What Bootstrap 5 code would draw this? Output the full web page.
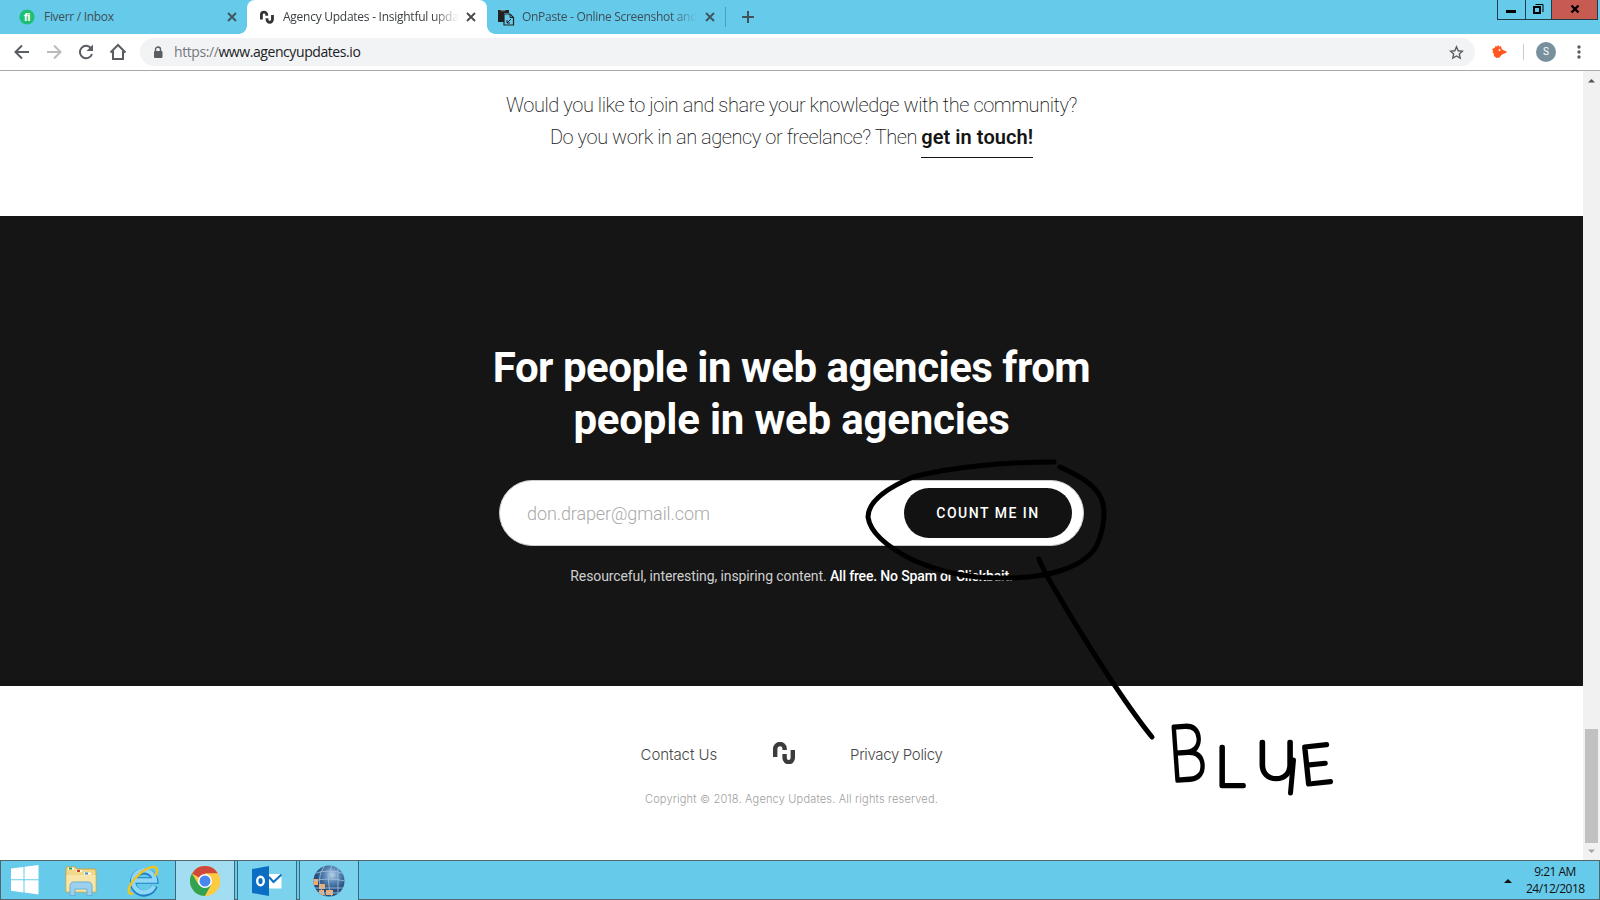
<!DOCTYPE html>
<html lang="en">
<head>
<meta charset="utf-8">
<title>Agency Updates</title>
<link href="https://cdn.jsdelivr.net/npm/bootstrap@5.3.0/dist/css/bootstrap.min.css" rel="stylesheet">
<style>
  body { width: 1600px; height: 900px; overflow: hidden; font-family: "Open Sans", sans-serif; background: #fff; color: #151515; line-height: 1; }
  svg { display: block; flex: none; }
  .tabstrip { height: 34px; background: #66caea; font-size: 12px; letter-spacing: -.3px; color: #3d4f57; }
  .tab-item { height: 34px; white-space: nowrap; }
  .tab-title { line-height: 18px; }
  .tab-fade { -webkit-mask-image: linear-gradient(90deg, #000 calc(100% - 26px), transparent); mask-image: linear-gradient(90deg, #000 calc(100% - 26px), transparent); }
  .tab-one { width: 247px; padding: 0 10px 0 19px; }
  .tab-two { width: 240px; padding: 0 11px 0 13px; background: #fff; border-radius: 8px 8px 0 0; color: #3c4043; }
  .tab-two::before, .tab-two::after { content: ""; position: absolute; bottom: 0; width: 8px; height: 8px; }
  .tab-two::before { left: -8px; background: radial-gradient(circle at 0 0, transparent 7.5px, #fff 8px); }
  .tab-two::after { right: -8px; background: radial-gradient(circle at 100% 0, transparent 7.5px, #fff 8px); }
  .tab-three { width: 238px; padding: 0 10px 0 10px; }
  .tab-rule { width: 1px; height: 20px; background: #4a9fba; }
  .win-buttons { height: 20px; margin-right: 2px; }
  .win-buttons > div { height: 20px; border: 1px solid #1f3b45; border-top: 0; border-left: 0; }
  .win-buttons > div:first-child { border-left: 1px solid #1f3b45; }
  .toolbar { height: 37px; padding: 4px 18px 0 13px; border-bottom: 1px solid #a9a9a9; }
  .omnibox { width: 1335px; height: 28px; border-radius: 14px; background: #f1f3f4; padding: 0 11px 0 13px; font-size: 14px; letter-spacing: -.42px; color: #202124; }
  .avatar { width: 20px; height: 20px; border-radius: 50%; background: #78909c; color: #fff; font: 10px/20px Roboto, sans-serif; }
  .page-area { height: 789px; }
  .site { width: 1583px; font-family: Roboto, sans-serif; }
  .join { height: 145px; padding-top: 18px; font-size: 20px; line-height: 32px; font-weight: 200; letter-spacing: -.44px; }
  .join a { color: #151515; font-weight: 600; letter-spacing: .05px; border-bottom: 1px solid #151515; padding-bottom: 8px; text-decoration: none; }
  .hero { height: 470px; background: #151515; padding-top: 126px; color: #fff; }
  .hero h2 { font-size: 42px; line-height: 52px; font-weight: 700; letter-spacing: -.5px; margin: 0; }
  .hero h2 .second { letter-spacing: -.2px; }
  .signup { width: 585px; height: 66px; border-radius: 33px; background: #fff; border: 1px solid #c9cccb; margin-top: 34px; padding: 0 11px 0 27px; }
  .signup .hint { font-size: 18px; font-weight: 300; color: #a9a9a9; letter-spacing: -.1px; padding-top: 2px; }
  .signup button { width: 168px; height: 50px; border-radius: 25px; background: #121212; color: #fff; border: 0; font-size: 14px; font-weight: 500; letter-spacing: 1.5px; padding: 0; }
  .note { margin-top: 21px; font-size: 14px; line-height: 18px; letter-spacing: -.1px; color: #cfcfcf; }
  .note b { font-weight: 500; color: #fff; letter-spacing: -.16px; }
  .foot { font-family: Inter, sans-serif; font-weight: 300; padding-top: 56px; color: #484848; }
  .foot .links { font-size: 15px; height: 27px; }
  .foot .links .lead-link { letter-spacing: -.08px; }
  .foot .links .tail-link { letter-spacing: -.35px; }
  .foot .copy { font-size: 11px; letter-spacing: .18px; color: #a0a0a0; margin-top: 23px; line-height: 14px; }
  .scroller { width: 17px; background: #f1f1f1; padding: 7px 2px 6px; }
  .thumb { width: 13px; height: 114px; background: #c1c1c1; margin-bottom: 6px; }
  .taskbar { height: 40px; background: #66caea; border: 1px solid #54656c; font-size: 12px; letter-spacing: -.5px; color: #111; }
  .task { width: 60px; height: 39px; border: 1px solid #37697a; border-top: 0; border-bottom: 0; background: #7ad2ed; margin-right: 2px; }
  .task.current { background: #a3ddf1; }
  .clock { width: 58px; line-height: 17px; white-space: nowrap; }
  .ink { left: 0; top: 0; pointer-events: none; }
</style>
</head>
<body class="d-flex flex-column">
<div class="tabstrip d-flex align-items-start">
  <div class="tab-item tab-one d-flex align-items-center">
    <svg width="16" height="16"><circle cx="8" cy="8" r="7.6" fill="#1dbf73"/><text x="8" y="11.8" text-anchor="middle" font-family="Roboto" font-weight="900" font-size="10" fill="#fff">fi</text></svg>
    <div class="tab-title flex-grow-1 pe-1" style="padding-left:9px">Fiverr / Inbox</div>
    <svg width="10" height="10" stroke="#3f535c" stroke-width="1.8"><path d="M1 1l8 8M9 1L1 9"/></svg>
  </div>
  <div class="tab-item tab-two position-relative d-flex align-items-center">
    <svg width="14" height="14" viewBox="0 0 22 22" fill="none" stroke="#333" stroke-width="4.4"><path d="M2.2 15V7.5a4.2 4.2 0 0 1 8.4 0V9M11 13v2a4.2 4.2 0 0 0 8.6 0V8"/></svg>
    <div class="tab-title tab-fade" style="margin-left:9px;letter-spacing:-.26px">Agency Updates - Insightful upda</div>
    <svg class="ms-auto" width="10" height="10" stroke="#45494d" stroke-width="1.8"><path d="M1 1l8 8M9 1L1 9"/></svg>
  </div>
  <div class="tab-item tab-three d-flex align-items-center">
    <svg width="18" height="17"><path d="M1 1h11v3H7v9H1z" fill="#222"/><path d="M3.5 1.7h5" stroke="#888"/><path d="M8 5h5l3.5 3.5V16H7V5z" fill="#66caea" stroke="#222" stroke-width="1.2"/><path d="M13 5v3.5h3.5M14 10l-4 4m0-3v3h3" fill="none" stroke="#222"/></svg>
    <div class="tab-title tab-fade" style="margin-left:7px">OnPaste - Online Screenshot and</div>
    <svg class="ms-auto" width="10" height="10" stroke="#3f535c" stroke-width="1.8"><path d="M1 1l8 8M9 1L1 9"/></svg>
  </div>
  <div class="d-flex align-items-center tab-item"><div class="tab-rule"></div>
    <svg class="ms-3" width="12" height="12" stroke="#3f535c" stroke-width="2"><path d="M6 0v12M0 6h12"/></svg></div>
  <div class="win-buttons d-flex ms-auto">
    <div style="width:29px"><svg width="27" height="19"><path d="M8 10h10v3H8z" fill="#000"/></svg></div>
    <div style="width:26px"><svg width="25" height="19" fill="none" stroke="#000"><path d="M8 7h6v6H8z" stroke-width="2"/><path d="M9.500 4.500h7.500V12"/></svg></div>
    <div style="width:46px;background:#c75b52"><svg width="45" height="19" stroke="#000" stroke-width="2.400"><path d="M19.500 5.500l7 7M26.500 5.500l-7 7"/></svg></div>
  </div>
</div>
<div class="toolbar d-flex align-items-start">
  <div class="d-flex align-items-center" style="height:28px">
    <svg width="18" height="18" fill="none" stroke="#5a5e63" stroke-width="2"><path d="M16 9H3M9 2.500L2.500 9 9 15.500"/></svg>
    <svg style="margin-left:14px" width="18" height="18" fill="none" stroke="#b9bbbd" stroke-width="2"><path d="M2 9h13M9 2.500L15.500 9 9 15.500"/></svg>
    <svg style="margin-left:14px" width="18" height="18"><path d="M14.200 5.500A6.200 6.200 0 1 0 15 11" fill="none" stroke="#5a5e63" stroke-width="2"/><path d="M16 1.500V8H9.500z" fill="#5a5e63"/></svg>
    <svg style="margin-left:14px" width="18" height="18" fill="none" stroke="#5a5e63" stroke-width="2"><path d="M1.500 9.500L9 2l7.500 7.500M4 8v8h10V8"/></svg>
  </div>
  <div class="omnibox d-flex align-items-center" style="margin-left:13px">
    <svg width="10" height="13"><path d="M2.500 5.500V3.500a2.500 2.500 0 0 1 5 0v2" fill="none" stroke="#5a5e63" stroke-width="1.400"/><rect x="1" y="5" width="8.500" height="7" rx="1" fill="#5a5e63"/></svg>
    <div style="margin-left:11px;line-height:20px"><span style="color:#75797d">https://</span>www.agencyupdates.io</div>
    <svg class="ms-auto" width="15" height="15" viewBox="0 0 15 15" fill="none" stroke="#5a5e63" stroke-width="1.400"><path d="M7.500 1.800l1.700 4 4.300.4-3.200 2.800.9 4.200-3.700-2.200-3.700 2.200.9-4.200L1.500 6.200l4.300-.4z"/></svg>
  </div>
  <div class="d-flex align-items-center ms-auto" style="height:28px">
    <svg width="16" height="16"><path d="M1 5l2.500-1L5 1.500l1 1.300L7.500 1l.8 1.700L10 2l.5 2.500L12 6l3.500 1.500v1.300L12 10l-2 1.500-1.500 2L5.500 14 3 12l-.5-3-1-.500.5-2z" fill="#ff5722"/><circle cx="8.500" cy="6" r="1" fill="#fff"/></svg>
    <div style="width:1px;height:16px;background:#c8cacc;margin-left:16px"></div>
    <div class="avatar text-center" style="margin-left:12px">S</div>
    <svg style="margin-left:18px" width="8" height="16" fill="#5a5e63"><circle cx="5" cy="3" r="1.700"/><circle cx="5" cy="8" r="1.700"/><circle cx="5" cy="13" r="1.700"/></svg>
  </div>
</div>
<div class="page-area d-flex">
  <main class="site">
    <section class="join text-center">
      <div>Would you like to join and share your knowledge with the community?</div>
      <div>Do you work in an agency or freelance? Then <a href="#">get in touch!</a></div>
    </section>
    <section class="hero d-flex flex-column align-items-center">
      <h2 class="text-center">For people in web agencies from<br><span class="second">people in web agencies</span></h2>
      <div class="signup d-flex align-items-center justify-content-between"><span class="hint">don.draper@gmail.com</span><button>COUNT ME IN</button></div>
      <div class="note">Resourceful, interesting, inspiring content. <b>All free. No Spam or Clickbait.</b></div>
    </section>
    <footer class="foot text-center">
      <div class="links d-flex justify-content-center align-items-start">
        <span class="lead-link" style="margin-top:5px">Contact Us</span>
        <svg style="margin:0 55px 0 56px" width="22" height="22" viewBox="0 0 22 22" fill="none" stroke="#3c3c3c" stroke-width="4.400"><path d="M2.200 15V7a4.700 4.700 0 0 1 9.400-.5V8M11.600 12v4a4.100 4.100 0 0 0 8.200 0V8"/></svg>
        <span class="tail-link" style="margin-top:5px">Privacy Policy</span>
      </div>
      <div class="copy">Copyright © 2018. Agency Updates. All rights reserved.</div>
    </footer>
  </main>
  <div class="scroller d-flex flex-column">
    <svg width="13" height="5"><path d="M3 4.500L6.500 1 10 4.500z" fill="#505050"/></svg>
    <div class="thumb mt-auto"></div>
    <svg width="13" height="5"><path d="M3 .5L6.500 4 10 .500z" fill="#a3a3a3"/></svg>
  </div>
</div>
<div class="taskbar d-flex align-items-start">
  <svg width="174" height="38" viewBox="1 861 174 38">
    <path d="M11 868.500l12.500-1.600v12.300H11zM24.500 866.700L38.500 865v14.200h-14zM11 880.200h12.500v12.300L11 890.700zM24.500 880.200h14v14.300l-14-2z" fill="#fff"/>
    <path d="M66 868q0-1 1-1h8l2 2h17q2 0 2 2v21H66z" fill="#f1d98c" stroke="#c9a545"/>
    <path d="M68 868.500h6M76 871h6M84 873.500h7" stroke="#fff" stroke-width="2"/><path d="M69 868.500h3" stroke="#20a745" stroke-width="2"/><path d="M77 871h3" stroke="#d63c2c" stroke-width="2"/><path d="M85 873.500h3" stroke="#3295dc" stroke-width="2"/>
    <path d="M66.500 875h29v16.500h-29z" fill="#f8e6a8"/>
    <path d="M70 895.500v-9q0-4.500 4-4.500h14q4 0 4 4.500v9h-5v-6.500H75v6.500z" fill="#9bd0ef" stroke="#6baed2"/>
    <path d="M154.500 886A11 11 0 1 1 155 880.500H135" fill="none" stroke="#1d82c4" stroke-width="6.600"/>
    <path d="M154 886A11 11 0 1 1 155 880.500H135" fill="none" stroke="#8fd6f7" stroke-width="4.400"/>
    <path d="M133 893.500c-7 2-5-8 3-16 8-9 20-14 21-8 .5 2-.5 4-2 6.500" fill="none" stroke="#f3c41d" stroke-width="2.400"/>
  </svg>
  <div class="task current d-flex align-items-center justify-content-center">
    <svg width="30" height="30" viewBox="-15 -15 30 30"><circle r="15" fill="#fccb42"/><path d="M0 0L-13-7.500A15 15 0 0 1 13-7.500H0z" fill="#d0483b"/><path d="M-13-7.500A15 15 0 0 0 0 15L6.500 3.500-6.500 3.500z" fill="#31a352"/><path d="M6.500 3.500L0 15A15 15 0 0 0 13-7.500H0z" fill="#fccb42"/><circle r="7" fill="#fff"/><circle r="5.500" fill="#4a86f0"/></svg>
  </div>
  <div class="task d-flex align-items-center justify-content-center">
    <svg width="30" height="30"><path d="M15 8h14.500v14.500H15z" fill="#fff"/><path d="M17 11l4.500 5 8-7.500" fill="none" stroke="#0f71c4" stroke-width="2"/><path d="M0 3l17-3v30L0 27z" fill="#0b6ec3"/><ellipse cx="8.500" cy="15" rx="3.300" ry="4.300" fill="none" stroke="#fff" stroke-width="2.400"/></svg>
  </div>
  <div class="task d-flex align-items-center justify-content-center">
    <svg width="32" height="32" viewBox="-16 -16 32 32"><defs><radialGradient id="globe" cx=".6" cy=".3"><stop offset="0" stop-color="#b9d3ea"/><stop offset=".5" stop-color="#5785b4"/><stop offset="1" stop-color="#264f80"/></radialGradient><clipPath id="disc"><circle r="15.500"/></clipPath></defs><circle r="15.500" fill="url(#globe)"/><g clip-path="url(#disc)"><path d="M-16-2h5v6h-5zM-10 3h6v5h-6zM-10 9h5v5h-5zM-3 9h7v5h-7z" fill="#f8a961"/><path d="M-16-7Q0-13 16-7M-16 0Q0-4 16 0M-16 7Q0 7 16 7M-14 12H14M-4-16Q-16 0-3 16M3-16Q-4 0 3 16M9-14Q9 0 9 14" fill="none" stroke="#a8c4df" stroke-width=".800"/></g></svg>
  </div>
  <div class="d-flex align-items-start ms-auto" style="height:38px;margin-right:15px">
    <svg width="8" height="4" style="margin:18px 14px 0 0"><path d="M0 4l4-4 4 4z" fill="#111"/></svg>
    <div class="clock text-center" style="padding-top:2px">9:21 AM<br>24/12/2018</div>
  </div>
</div>
<!-- pen annotation over the page -->
<svg class="ink position-absolute" width="1600" height="900" fill="none" stroke="#000" stroke-width="5" stroke-linecap="round" stroke-linejoin="round">
  <path d="M1054 462C1006 462 950 467 913 477C880 491 868 504 868 517C870 532 885 546 913 560C940 572 972 579 1006 578C1045 578 1082 569 1096 547C1105 528 1106 508 1101 498C1095 485 1080 476 1060 467"/>
  <path d="M1039 559C1043 570 1050 582 1060 598C1082 636 1125 704 1152 737"/>
  <g fill="#000" stroke-width="4.600" font-family="Lato" font-weight="100">
    <text transform="translate(1170 781) rotate(-4) scale(.8 1)" font-size="77">B</text>
    <text transform="translate(1215 786) scale(1.050 1)" font-size="56">L</text>
    <text transform="translate(1256 779) scale(1.080 1)" font-size="52">U</text>
    <text transform="translate(1302 785) rotate(-6) scale(1.020 1)" font-size="54">E</text>
  </g>
  <path d="M1293.500 760L1290.500 793" stroke-width="5"/>
</svg>
<script src="https://cdn.jsdelivr.net/npm/bootstrap@5.3.0/dist/js/bootstrap.bundle.min.js"></script>
</body>
</html>
